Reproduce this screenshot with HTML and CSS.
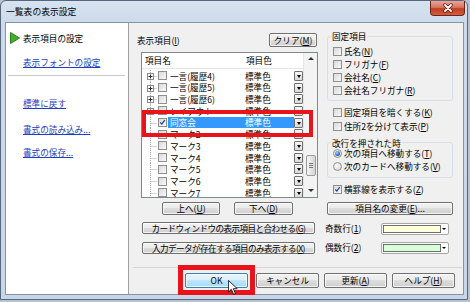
FILE: index.html
```html
<!DOCTYPE html>
<html lang="ja">
<head>
<meta charset="utf-8">
<title>一覧表の表示設定</title>
<link rel="stylesheet" href="styles.css">
</head>
<body>
<svg class="defs" aria-hidden="true">
  <symbol id="tree-plus" viewBox="0 0 15 12">
    <path d="M8.5 0V3.5M8.5 9.5V12M11.5 6.5H15" stroke="#a8a8a8" stroke-dasharray="1 1" fill="none"/>
    <rect x="5.5" y="3.5" width="6" height="6" fill="#fff" stroke="#8c8c8c"/>
    <path d="M6.5 6.5h4M8.5 4.5v4" stroke="#2b2b2b"/>
  </symbol>
  <symbol id="tree-leaf" viewBox="0 0 15 12">
    <path d="M8.5 0V12M9.5 6.5H15" stroke="#a8a8a8" stroke-dasharray="1 1" fill="none"/>
  </symbol>
  <symbol id="check" viewBox="0 0 9 9">
    <path d="M1.6 4.4L3.6 6.6L7.4 1.6" stroke="#1d3f95" stroke-width="1.6" fill="none"/>
  </symbol>
</svg>
<div class="window">
  <div class="titlebar">
    <span class="title">一覧表の表示設定</span>
    <div class="close">
      <svg width="12" height="10" viewBox="0 0 12 10"><path d="M3 2l6 6M9 2l-6 6" stroke="#5a1c12" stroke-width="3.4" stroke-linecap="round"/><path d="M3 2l6 6M9 2l-6 6" stroke="#fff" stroke-width="1.8" stroke-linecap="round"/></svg>
    </div>
  </div>
  <div class="client">
    <nav class="sidebar">
      <div class="nav-current">
        <svg class="tri" width="10" height="12" viewBox="0 0 10 12"><path d="M0.5 0.5L9.5 6L0.5 11.5Z" fill="#45ad2c" stroke="#2f7f1c"/></svg>
        <span>表示項目の設定</span>
      </div>
      <a class="nav-link nl-font" href="#">表示フォントの設定</a>
      <div class="nav-sep"></div>
      <a class="nav-link nl-reset" href="#">標準に戻す</a>
      <a class="nav-link nl-load" href="#">書式の読み込み...</a>
      <a class="nav-link nl-save" href="#">書式の保存...</a>
    </nav>
    <div class="content">
      <div class="top">
        <div class="items">
          <div class="items-head">
            <span>表示項目(<u>I</u>)</span>
            <button class="btn btn-clear">クリア(<u>M</u>)</button>
          </div>
          <div class="list">
            <div class="list-main">
              <div class="list-header"><span class="h-name">項目名</span><span class="h-color">項目色</span></div>
              <div class="rows">
                <div class="row"><svg class="tree"><use href="#tree-plus"/></svg><span class="cb"></span><span class="cells"><span class="c-name">一言(履歴4)</span><span class="c-color">標準色</span></span><span class="dd"></span></div>
                <div class="row"><svg class="tree"><use href="#tree-plus"/></svg><span class="cb"></span><span class="cells"><span class="c-name">一言(履歴5)</span><span class="c-color">標準色</span></span><span class="dd"></span></div>
                <div class="row"><svg class="tree"><use href="#tree-plus"/></svg><span class="cb"></span><span class="cells"><span class="c-name">一言(履歴6)</span><span class="c-color">標準色</span></span><span class="dd"></span></div>
                <div class="row"><svg class="tree"><use href="#tree-plus"/></svg><span class="cb"></span><span class="cells"><span class="c-name">レイアウト</span><span class="c-color">標準色</span></span><span class="dd"></span></div>
                <div class="row sel"><svg class="tree"><use href="#tree-leaf"/></svg><span class="cb"><svg width="9" height="9"><use href="#check"/></svg></span><span class="cells"><span class="c-name">同窓会</span><span class="c-color">標準色</span></span><span class="dd"></span></div>
                <div class="row"><svg class="tree"><use href="#tree-leaf"/></svg><span class="cb"></span><span class="cells"><span class="c-name">マーク2</span><span class="c-color">標準色</span></span><span class="dd"></span></div>
                <div class="row"><svg class="tree"><use href="#tree-leaf"/></svg><span class="cb"></span><span class="cells"><span class="c-name">マーク3</span><span class="c-color">標準色</span></span><span class="dd"></span></div>
                <div class="row"><svg class="tree"><use href="#tree-leaf"/></svg><span class="cb"></span><span class="cells"><span class="c-name">マーク4</span><span class="c-color">標準色</span></span><span class="dd"></span></div>
                <div class="row"><svg class="tree"><use href="#tree-leaf"/></svg><span class="cb"></span><span class="cells"><span class="c-name">マーク5</span><span class="c-color">標準色</span></span><span class="dd"></span></div>
                <div class="row"><svg class="tree"><use href="#tree-leaf"/></svg><span class="cb"></span><span class="cells"><span class="c-name">マーク6</span><span class="c-color">標準色</span></span><span class="dd"></span></div>
                <div class="row"><svg class="tree"><use href="#tree-leaf"/></svg><span class="cb"></span><span class="cells"><span class="c-name">マーク7</span><span class="c-color">標準色</span></span><span class="dd"></span></div>
              </div>
            </div>
            <div class="vscroll">
              <span class="sb-arrow up"></span>
              <div class="sb-track"><span class="sb-thumb"></span></div>
              <span class="sb-arrow down"></span>
            </div>
          </div>
          <div class="updown">
            <button class="btn btn-up">上へ(<u>U</u>)</button>
            <button class="btn btn-down">下へ(<u>D</u>)</button>
          </div>
          <button class="btn btn-wide btn-match">カードウィンドウの表示項目と合わせる(<u>G</u>)</button>
          <button class="btn btn-wide btn-exist">入力データが存在する項目のみ表示する(<u>X</u>)</button>
        </div>
        <div class="options">
          <fieldset class="group g-fixed">
            <legend>固定項目</legend>
            <label class="opt first"><span class="cb"></span>氏名(<u>N</u>)</label>
            <label class="opt"><span class="cb"></span>フリガナ(<u>F</u>)</label>
            <label class="opt"><span class="cb"></span>会社名(<u>C</u>)</label>
            <label class="opt"><span class="cb"></span>会社名フリガナ(<u>R</u>)</label>
          </fieldset>
          <label class="opt solo opt-dark"><span class="cb"></span>固定項目を暗くする(<u>K</u>)</label>
          <label class="opt solo"><span class="cb"></span>住所2を分けて表示(<u>P</u>)</label>
          <fieldset class="group g-enter">
            <legend>改行を押された時</legend>
            <label class="radio-row first"><span class="rb on"></span>次の項目へ移動する(<u>T</u>)</label>
            <label class="radio-row second"><span class="rb"></span>次のカードへ移動する(<u>V</u>)</label>
          </fieldset>
          <label class="opt solo opt-line"><span class="cb"><svg width="9" height="9"><use href="#check"/></svg></span>横罫線を表示する(<u>Z</u>)</label>
          <button class="btn btn-rename">項目名の変更(<u>E</u>)...</button>
          <div class="color-row odd">
            <span>奇数行(<u>1</u>)</span>
            <span class="combo"><span class="swatch sw-odd"></span><span class="combo-arrow"></span></span>
          </div>
          <div class="color-row even">
            <span>偶数行(<u>2</u>)</span>
            <span class="combo"><span class="swatch sw-even"></span><span class="combo-arrow"></span></span>
          </div>
        </div>
      </div>
      <div class="footer">
        <button class="btn btn-foot btn-ok">OK</button>
        <button class="btn btn-foot btn-cancel">キャンセル</button>
        <button class="btn btn-foot btn-update">更新(<u>A</u>)</button>
        <button class="btn btn-foot btn-help">ヘルプ(<u>H</u>)</button>
      </div>
    </div>
  </div>
  <div class="mark mark-row"></div>
  <div class="mark mark-ok"></div>
  <svg class="cursor" width="10" height="15" viewBox="0 0 12 18"><path d="M0.5 0.5V14.5L4 11.2L6.6 17.2L8.9 16.2L6.4 10.4H11.1Z" fill="#fff" stroke="#000" stroke-linejoin="round"/></svg>
</div>
</body>
</html>
```

FILE: styles.css
```css
* { box-sizing: border-box; margin: 0; padding: 0; }
html, body { width: 470px; height: 302px; overflow: hidden; }
body {
  background: #b8c4d1;
  font-family: "Noto Sans CJK JP", "Noto Sans", sans-serif;
  font-size: 8.6px;
  line-height: 1.2;
  color: #000;
}
u { text-decoration: underline; }
.defs { position: absolute; width: 0; height: 0; overflow: hidden; }

.window {
  position: relative;
  width: 468px;
  height: 300px;
  border: 1px solid #56687d;
  border-radius: 6px 6px 0 0;
  background: linear-gradient(180deg, #d7e3ef 0, #cddaea 22px, #c8d6e6 100%);
  display: flex;
  flex-direction: column;
}
.titlebar { height: 21px; display: flex; align-items: flex-start; flex-shrink: 0; }
.title { padding-left: 5px; line-height: 21px; font-size: 8.8px; color: #000; }
.close {
  margin-left: auto;
  margin-right: 2px;
  width: 35px;
  height: 15px;
  border: 1px solid #6e2418;
  border-top: none;
  border-radius: 0 0 4px 4px;
  background: linear-gradient(180deg, #eaa596 0, #d87562 45%, #c23c25 55%, #d0603f 100%);
  display: flex;
  align-items: center;
  justify-content: center;
}

.client {
  flex: 1;
  margin: 0 3px 4px 4px;
  border: 1px solid #8394aa;
  display: flex;
  background: #f0f0f0;
}

/* sidebar */
.sidebar {
  width: 123px;
  flex-shrink: 0;
  background: #fff;
  border-right: 1px solid #a0a0a0;
  display: flex;
  flex-direction: column;
  align-items: flex-start;
}
.nav-current { display: flex; align-items: center; height: 14px; margin-top: 8px; padding-left: 4px; }
.tri { margin-right: 3px; }
.nav-link { display: block; height: 14px; line-height: 14px; margin-left: 17px; color: #1d3fc0; text-decoration: underline; }
.nl-font { margin-top: 10px; }
.nav-sep { align-self: stretch; height: 1px; background: #c9c9c9; margin: 6px 3px 0 2px; }
.nl-reset { margin-top: 20px; }
.nl-load { margin-top: 12px; }
.nl-save { margin-top: 9px; }

/* content */
.content { flex: 1; display: flex; flex-direction: column; }
.top { height: 244px; display: flex; padding-left: 8px; }
.items { width: 181px; padding-top: 10px; display: flex; flex-direction: column; align-items: flex-start; }
.options { width: 130px; margin-left: 7px; padding-top: 8px; display: flex; flex-direction: column; align-items: flex-start; }

/* buttons */
.btn {
  font: inherit;
  color: #000;
  border: 1px solid #707070;
  border-radius: 2px;
  background: linear-gradient(180deg, #f2f2f2 0%, #ebebeb 49%, #dddddd 50%, #cfcfcf 100%);
  box-shadow: inset 0 0 0 1px rgba(255,255,255,0.75);
  display: flex;
  align-items: center;
  justify-content: center;
  padding: 0;
  white-space: nowrap;
  line-height: 1;
}
.items-head { display: flex; align-items: center; height: 14px; width: 100%; }
.btn-clear { margin-left: auto; margin-right: 1px; width: 48px; height: 14px; }

/* list */
.list {
  margin-top: 5px;
  margin-left: 4px;
  width: 177px;
  height: 146px;
  border: 1px solid #828790;
  background: #fff;
  display: flex;
  overflow: hidden;
}
.list-main { width: 161px; display: flex; flex-direction: column; flex-shrink: 0; }
.list-header { height: 16px; border-bottom: 1px solid #e3e6ea; display: flex; align-items: center; flex-shrink: 0; }
.h-name { width: 101px; padding-left: 3px; }
.h-color { padding-left: 3px; }
.rows { padding-top: 1px; overflow: hidden; flex: 1; }
.row { height: 11.7px; display: flex; align-items: center; }
.tree { width: 15px; height: 12px; flex-shrink: 0; display: block; }
.cb {
  width: 9px;
  height: 9px;
  border: 1px solid #8e8f8f;
  background: linear-gradient(135deg, #d9d9d9, #f9f9f9);
  flex-shrink: 0;
  display: flex;
  align-items: center;
  justify-content: center;
}
.cb svg { display: block; }
.row .cb { margin-left: 1px; }
.cells { margin-left: 1px; width: 126px; height: 100%; display: flex; align-items: center; flex-shrink: 0; }
.c-name { width: 75px; padding-left: 2px; }
.c-color { padding-left: 2px; }
.row.sel .cells { background: #3399ff; color: #fff; }
.dd {
  width: 9px;
  height: 10px;
  border: 1px solid #707070;
  border-radius: 1px;
  background: linear-gradient(180deg, #f6f6f6, #d9d9d9);
  display: flex;
  align-items: center;
  justify-content: center;
  flex-shrink: 0;
}
.dd::after { content: ""; margin-top: 1px; border-left: 2.5px solid transparent; border-right: 2.5px solid transparent; border-top: 3px solid #000; }

.vscroll { width: 14px; display: flex; flex-direction: column; background: #f3f3f3; border-left: 1px solid #e6e6e6; }
.sb-arrow { width: 100%; display: flex; align-items: center; justify-content: center; flex-shrink: 0; }
.sb-arrow.up { height: 10px; }
.sb-arrow.down { height: 14px; }
.sb-arrow::after { content: ""; border-left: 3px solid transparent; border-right: 3px solid transparent; }
.sb-arrow.up::after { border-bottom: 3px solid #333; }
.sb-arrow.down::after { border-top: 3px solid #333; }
.sb-track { flex: 1; width: 100%; }
.sb-thumb {
  display: block;
  margin: 92px auto 0;
  width: 10px;
  height: 21px;
  border: 1px solid #9a9a9a;
  border-radius: 2px;
  background:
    linear-gradient(#777, #777) center 7px / 4px 1px no-repeat,
    linear-gradient(#777, #777) center 9px / 4px 1px no-repeat,
    linear-gradient(#777, #777) center 11px / 4px 1px no-repeat,
    linear-gradient(90deg, #f5f5f5, #e6e6e6 50%, #d4d4d4);
}

.updown { display: flex; margin-top: 4px; height: 13px; }
.btn-up { margin-left: 25px; width: 58px; height: 13px; }
.btn-down { margin-left: 14px; width: 59px; height: 13px; }
.btn-wide { margin-left: 5px; width: 173px; height: 12px; letter-spacing: -0.6px; }
.btn-match { margin-top: 7px; }
.btn-exist { margin-top: 8px; }

/* options */
.group {
  border: 1px solid #d5dfe5;
  border-radius: 3px;
  margin-left: 2px;
  width: 126px;
  padding: 0 0 3px 5px;
}
.group legend { padding: 0 1px; margin-left: -2px; line-height: 11px; }
.opt { display: flex; align-items: center; height: 14px; }
.opt .cb { margin-right: 2px; }
.g-fixed .opt { height: 13px; }
.g-fixed .opt.first { margin-top: 2.5px; }
.solo { margin-left: 8px; }
.opt-dark { margin-top: 5px; }
.g-enter { margin-top: 4px; padding-bottom: 5px; }
.g-enter legend { line-height: 10px; }
.radio-row { display: flex; align-items: center; height: 10px; }
.radio-row.first { margin-top: 1px; }
.radio-row.second { margin-top: 3px; }
.rb {
  width: 9px;
  height: 9px;
  border-radius: 50%;
  border: 1px solid #8e8f8f;
  background: radial-gradient(circle at 35% 35%, #fafafa, #d6d6d6);
  margin-right: 2px;
  display: flex;
  align-items: center;
  justify-content: center;
  flex-shrink: 0;
}
.rb.on::after { content: ""; width: 5px; height: 5px; border-radius: 50%; background: radial-gradient(circle at 40% 35%, #9cd0ff, #1e5fc8 70%); }
.opt-line { margin-top: 5px; }
.btn-rename { margin-top: 5px; margin-left: 2px; width: 126px; height: 13px; }
.color-row { display: flex; align-items: center; height: 12px; width: 100%; }
.color-row.odd { margin-top: 8px; }
.color-row.even { margin-top: 7px; }
.combo {
  margin-left: auto;
  margin-right: 6px;
  width: 68px;
  height: 12px;
  border: 1px solid #a6a6a6;
  border-radius: 2px;
  background: #fff;
  display: flex;
  align-items: stretch;
  padding: 1px;
}
.swatch { flex: 1; border: 1px solid #6e6e6e; }
.sw-odd { background: #ffffd8; }
.sw-even { background: #d8ffd8; }
.combo-arrow { width: 6px; display: flex; align-items: center; justify-content: center; }
.combo-arrow::after { content: ""; border-left: 2px solid transparent; border-right: 2px solid transparent; border-top: 2px solid #000; }

/* footer */
.footer {
  flex: 1;
  margin: 0 1px 0 4px;
  border-top: 1px solid #d5d5d5;
  display: flex;
  align-items: flex-start;
  padding: 5px 0 0 52px;
}
.btn-foot { width: 63px; height: 15px; }
.btn-ok {
  border-color: #3c7fb1;
  background: linear-gradient(180deg, #eaf6fd 0%, #d9f0fc 49%, #bee6fd 50%, #a7d9f5 100%);
}
.btn-cancel { margin-left: 8px; }
.btn-update { margin-left: 5px; }
.btn-help { margin-left: 5px; }

/* overlays */
.mark { position: absolute; border: 4px solid #e8141b; }
.mark-row { left: 141px; top: 109px; width: 171px; height: 27px; }
.mark-ok { left: 177px; top: 264px; width: 77px; height: 30px; border-width: 5px; }
.cursor { position: absolute; left: 227px; top: 279px; }
```
